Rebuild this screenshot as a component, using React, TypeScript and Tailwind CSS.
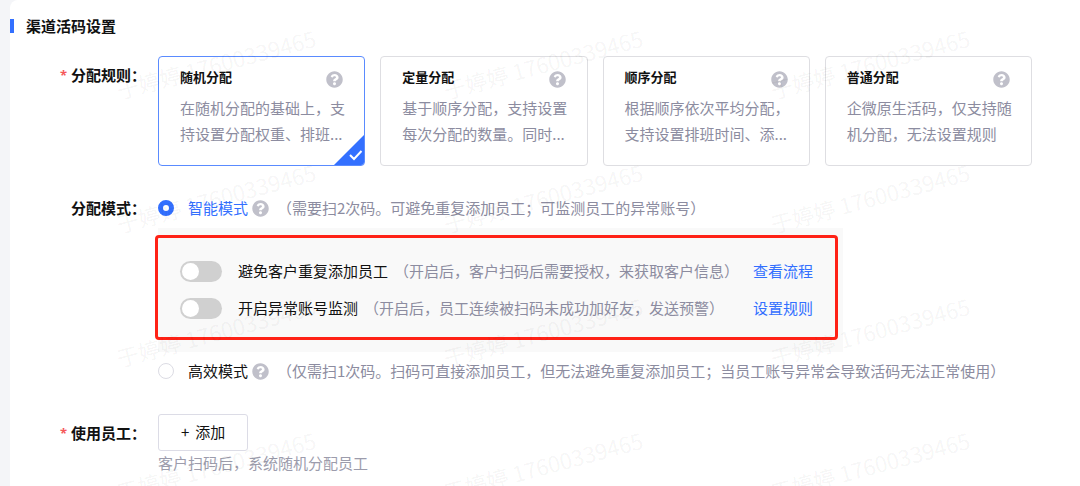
import React, { useState } from "react";
import { FaQuestionCircle } from "react-icons/fa";

const rules = [
	{
		name: "随机分配",
		lines: ["在随机分配的基础上，支", "持设置分配权重、排班..."],
	},
	{
		name: "定量分配",
		lines: ["基于顺序分配，支持设置", "每次分配的数量。同时..."],
	},
	{
		name: "顺序分配",
		lines: ["根据顺序依次平均分配，", "支持设置排班时间、添..."],
	},
	{
		name: "普通分配",
		lines: ["企微原生活码，仅支持随", "机分配，无法设置规则"],
	},
];

const switches = [
	{
		name: "避免客户重复添加员工",
		hint: "（开启后，客户扫码后需要授权，来获取客户信息）",
		link: "查看流程",
	},
	{
		name: "开启异常账号监测",
		hint: "（开启后，员工连续被扫码未成功加好友，发送预警）",
		link: "设置规则",
	},
];

function Help() {
	return <FaQuestionCircle className="size-[17px] shrink-0 text-[#c0c0ca]" />;
}

function FieldLabel({
	text,
	required,
}: {
	text: string;
	required?: boolean;
}) {
	return (
		<div className="flex w-[136px] shrink-0 justify-end font-bold leading-6">
			{required && (
				<span className="mr-1 font-['Open_Sans'] text-[13px] leading-6 text-[#f5585a]">
					*
				</span>
			)}
			{text}：
		</div>
	);
}

function RuleCard({
	rule,
	checked,
	onSelect,
}: {
	rule: (typeof rules)[number];
	checked: boolean;
	onSelect: () => void;
}) {
	return (
		<label
			className={`relative block cursor-pointer overflow-hidden rounded border px-[21px] pt-[10px] pb-[18px] ${
				checked ? "border-[#5a8bff]" : "border-[#dedee2]"
			}`}
		>
			<input
				type="radio"
				name="rule"
				className="sr-only"
				checked={checked}
				onChange={onSelect}
			/>
			<div className="flex h-6 justify-between">
				<span className="text-[13px] font-bold leading-5">
					{rule.name}
				</span>
				<span className="self-center">
					<Help />
				</span>
			</div>
			<div className="mt-1 leading-[26px] whitespace-nowrap text-[#8c8ca0]">
				{rule.lines.map((line) => (
					<div key={line}>{line}</div>
				))}
			</div>
			{checked && (
				<svg
					className="absolute right-0 bottom-0 size-[30px]"
					viewBox="0 0 30 30"
				>
					<path d="M30 0V30H0Z" fill="#3370ff" />
					<path
						d="M16 20l4 4 7.500-8"
						fill="none"
						stroke="#fff"
						strokeWidth="2"
					/>
				</svg>
			)}
		</label>
	);
}

function ModeOption({
	name,
	hint,
	checked,
	onSelect,
}: {
	name: string;
	hint: string;
	checked: boolean;
	onSelect: () => void;
}) {
	return (
		<div className="flex items-center leading-6 whitespace-nowrap">
			<label
				className={`flex cursor-pointer items-center ${
					checked ? "text-[#3370ff]" : ""
				}`}
			>
				<input
					type="radio"
					name="mode"
					className="mr-[14px] size-4 appearance-none rounded-full border border-[#dcdce4] bg-white checked:border-[5px] checked:border-[#3370ff]"
					checked={checked}
					onChange={onSelect}
				/>
				{name}
			</label>
			<span className="ml-1">
				<Help />
			</span>
			<span className="ml-2 text-[#8c8ca0]">{hint}</span>
		</div>
	);
}

function Watermark() {
	return (
		<div
			aria-hidden="true"
			className="pointer-events-none absolute inset-y-0 -right-40 left-0 grid auto-rows-[134px] grid-cols-[repeat(auto-fill,327px)] overflow-hidden pt-[72px] pl-30"
		>
			{Array.from({ length: 12 }).map((_, index) => (
				<span
					key={index}
					className="origin-left -rotate-15 text-[22px] leading-8 whitespace-nowrap text-black/5"
				>
					于婷婷 17600339465
				</span>
			))}
		</div>
	);
}

export default function App() {
	const [rule, setRule] = useState(0);
	const [mode, setMode] = useState("smart");

	return (
		<div className="min-h-screen bg-[#f4f5f8] pl-[10px] font-['Noto_Sans_CJK_SC',sans-serif] text-[15px] text-[#111]">
			<main className="relative min-h-screen overflow-hidden rounded-tl-lg bg-white">
				<h1 className="flex h-[52px] items-center font-bold">
					<span className="mr-3 h-[14px] w-1 bg-[#3370ff]" />
					渠道活码设置
				</h1>

				<div className="mt-1 flex gap-3 pr-12">
					<div className="pt-[7px]">
						<FieldLabel text="分配规则" required />
					</div>
					<div className="grid flex-1 grid-cols-4 gap-[15px]">
						{rules.map((item, index) => (
							<RuleCard
								key={item.name}
								rule={item}
								checked={rule === index}
								onSelect={() => setRule(index)}
							/>
						))}
					</div>
				</div>

				<div className="mt-[30px] flex gap-3">
					<FieldLabel text="分配模式" />
					<div>
						<ModeOption
							name="智能模式"
							hint="（需要扫2次码。可避免重复添加员工；可监测员工的异常账号）"
							checked={mode === "smart"}
							onSelect={() => setMode("smart")}
						/>
						<div className="relative mt-2 flex w-fit flex-col gap-[13px] bg-[#f9f9f9] pt-[31px] pr-[30px] pb-8 pl-[22px] leading-6 whitespace-nowrap">
							{switches.map((item) => (
								<div
									key={item.name}
									className="flex items-center"
								>
									<label className="flex cursor-pointer items-center">
										<input
											type="checkbox"
											role="switch"
											className="mr-4 h-[21px] w-[42px] appearance-none rounded-full bg-[#d0d0d0] before:m-[2px] before:block before:size-[17px] before:rounded-full before:bg-white checked:bg-[#3370ff] checked:before:ml-[23px]"
										/>
										{item.name}
									</label>
									<span className="ml-[6px] text-[#8c8ca0]">
										{item.hint}
									</span>
									<a
										href="#"
										className="ml-auto pl-[14px] text-[#3370ff]"
									>
										{item.link}
									</a>
								</div>
							))}
							<div className="pointer-events-none absolute top-[7px] right-[5px] bottom-3 -left-[3px] rounded border-[3px] border-[#ff2216]" />
						</div>
						<div className="mt-[7px]">
							<ModeOption
								name="高效模式"
								hint="（仅需扫1次码。扫码可直接添加员工，但无法避免重复添加员工；当员工账号异常会导致活码无法正常使用）"
								checked={mode === "fast"}
								onSelect={() => setMode("fast")}
							/>
						</div>
					</div>
				</div>

				<div className="mt-[31px] flex gap-3">
					<div className="pt-[7px]">
						<FieldLabel text="使用员工" required />
					</div>
					<div>
						<button
							type="button"
							className="flex h-[37px] items-center gap-[6px] rounded-[3px] border border-[#dcdce6] px-[22px]"
						>
							<span>+</span>
							<span>添加</span>
						</button>
						<p className="leading-6 text-[#9c9cac]">
							客户扫码后，系统随机分配员工
						</p>
					</div>
				</div>

				<Watermark />
			</main>
		</div>
	);
}
